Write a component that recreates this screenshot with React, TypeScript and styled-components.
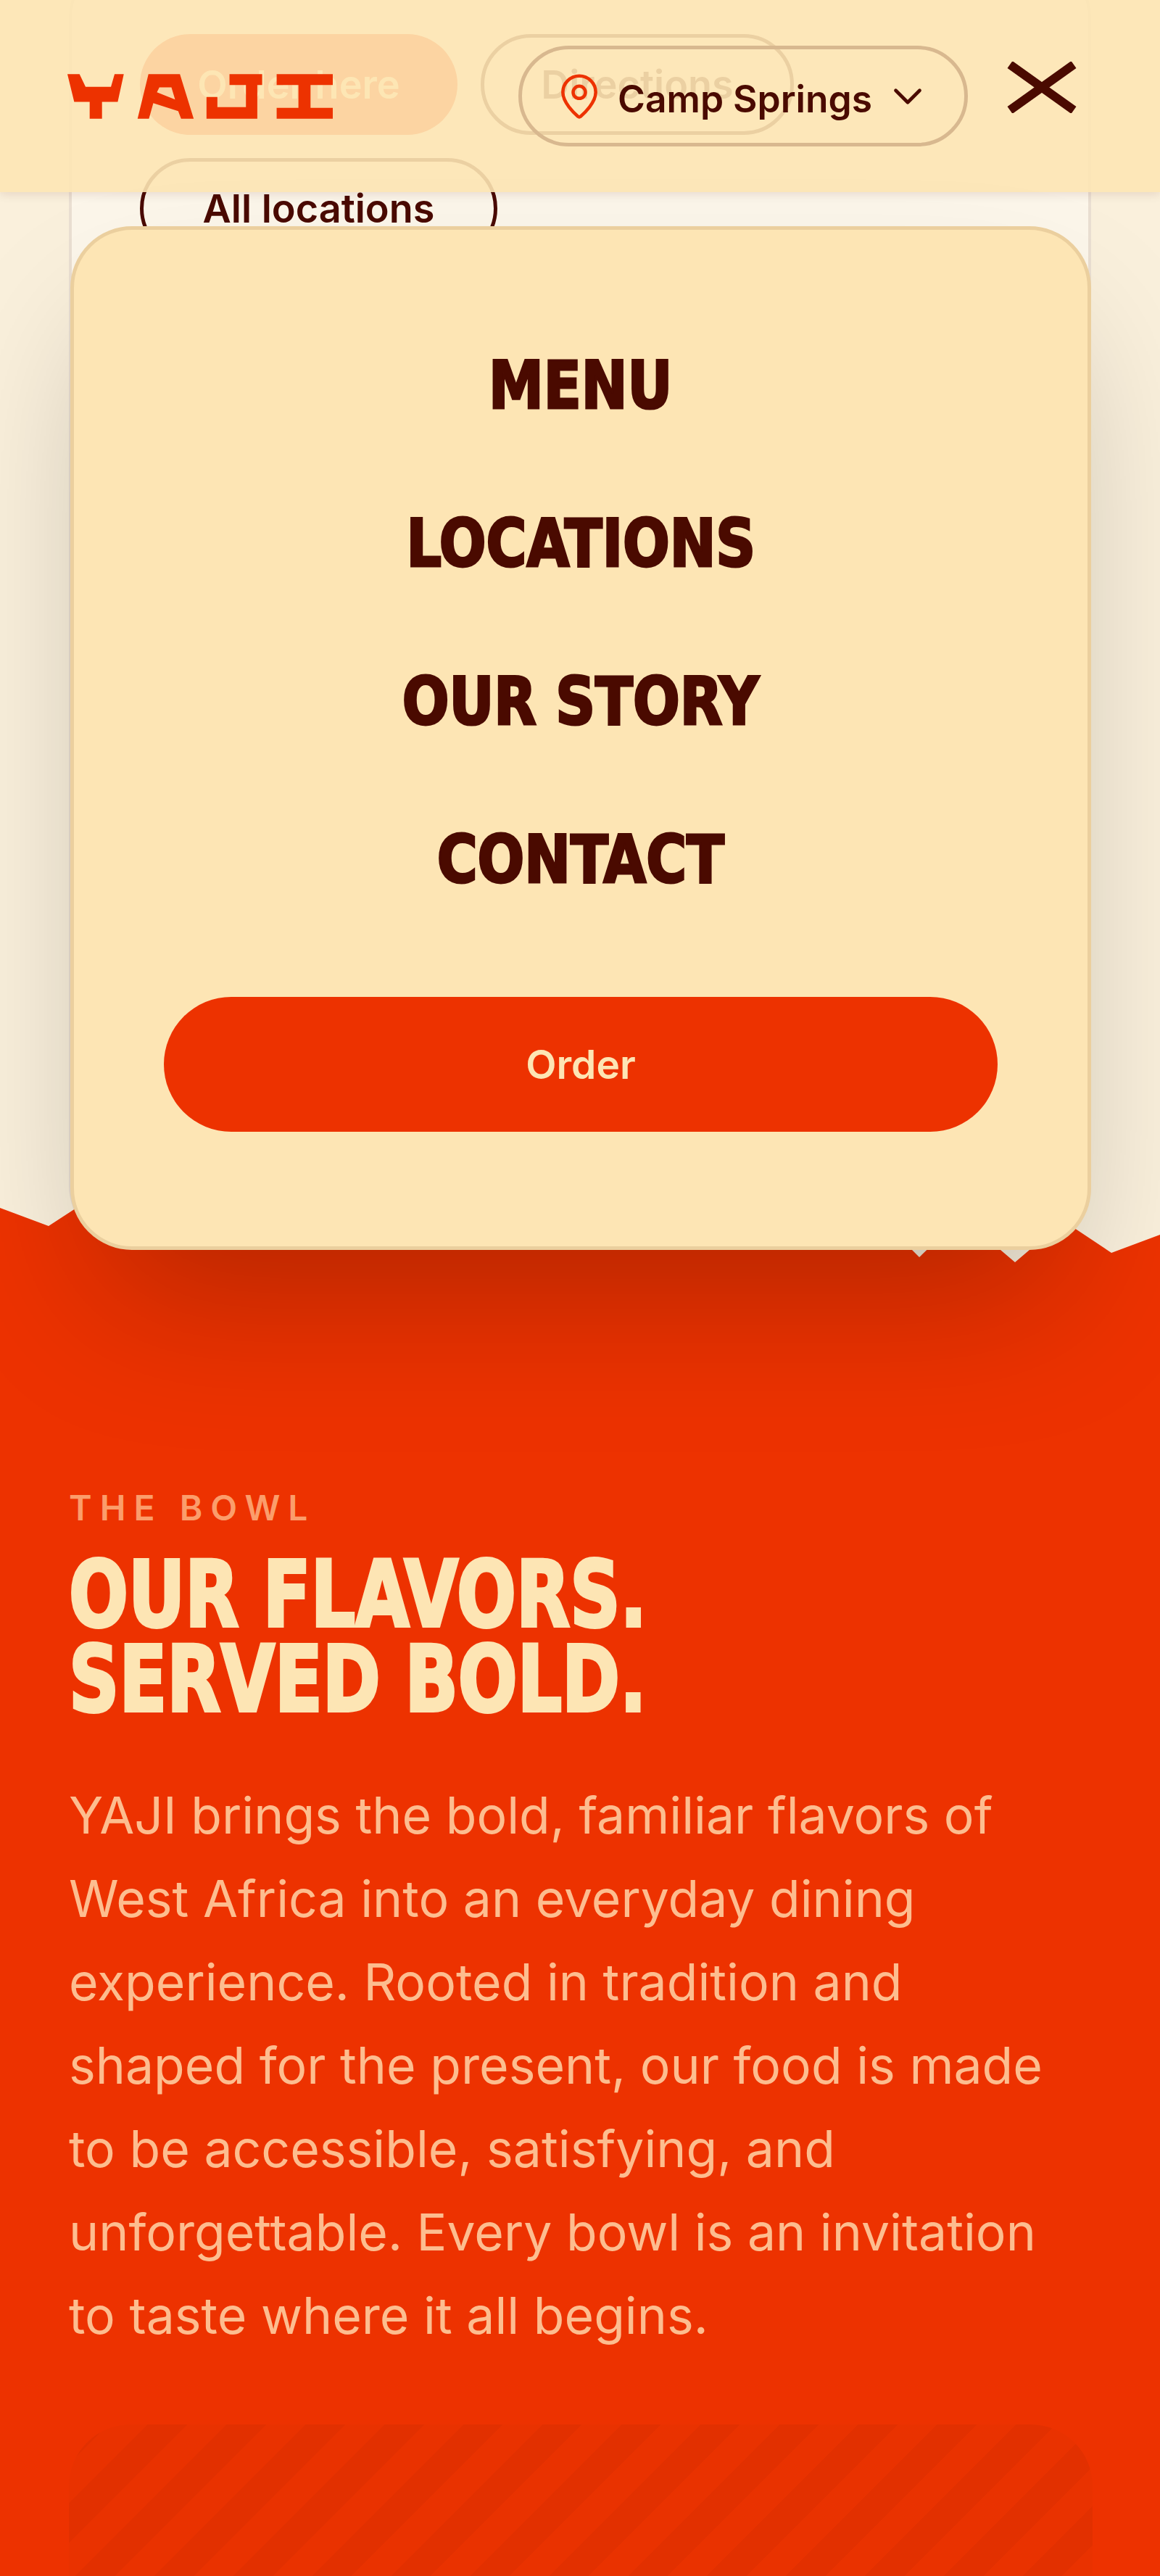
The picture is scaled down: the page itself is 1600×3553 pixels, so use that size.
import styled, { createGlobalStyle } from "styled-components";
import { ChevronDown, MapPin } from "lucide-react";

const cream = "#fde5b4";
const red = "#ed3200";
const maroon = "#4a0a00";

const GlobalStyle = createGlobalStyle`
  html, body {
    margin: 0;
    padding: 0;
    background: #faf0dc;
  }
  * {
    box-sizing: border-box;
  }
`;

const Page = styled.div`
  position: relative;
  width: 1600px;
  height: 3553px;
  overflow: hidden;
  font-family: Inter, "Liberation Sans", sans-serif;
`;

const Hero = styled.section`
  height: 1780px;
  background: #faf0dc;
  padding: 0 95px;
  overflow: hidden;
`;

const LocationCard = styled.div`
  height: 1780px;
  margin-top: -60px;
  padding: 103px 90px 0 94px;
  background: #fcf6ea;
  border: 4px solid #eadfd2;
  border-radius: 85px;
`;

const PillRow = styled.div`
  display: flex;
  flex-wrap: wrap;
  gap: 32px;
`;

const CardPill = styled.a<{ $solid?: boolean; $width: number }>`
  display: flex;
  align-items: center;
  justify-content: center;
  height: 139px;
  width: ${(p) => p.$width}px;
  border-radius: 70px;
  font-size: 54px;
  font-weight: 600;
  color: ${(p) => (p.$solid ? cream : maroon)};
  background: ${(p) => (p.$solid ? red : "transparent")};
  border: ${(p) => (p.$solid ? "none" : `5px solid ${maroon}`)};
`;

const Header = styled.header`
  position: absolute;
  top: 0;
  left: 0;
  display: flex;
  align-items: center;
  justify-content: space-between;
  width: 1600px;
  height: 265px;
  padding: 0 115px 0 93px;
  background: rgba(253, 229, 180, 0.9);
  box-shadow: 0 4px 12px rgba(74, 10, 0, 0.1);
`;

const Logo = styled.svg`
  display: block;
  width: 366px;
  height: 62px;
  fill: ${red};
`;

const HeaderRight = styled.div`
  display: flex;
  align-items: center;
  gap: 54px;
`;

const LocationSelect = styled.button`
  display: flex;
  align-items: center;
  width: 620px;
  height: 139px;
  padding: 0 45px 0 45px;
  font-family: inherit;
  font-size: 51.5px;
  font-weight: 600;
  color: ${maroon};
  background: transparent;
  border: 5px solid #d8b88f;
  border-radius: 70px;
`;

const LocationName = styled.span`
  flex: 1;
  margin: 6px 0 0 19px;
  text-align: left;
  white-space: nowrap;
`;

const CloseIcon = styled.svg`
  display: block;
  width: 96px;
  height: 71px;
  margin-top: -24px;
  stroke: ${maroon};
  stroke-width: 12;
`;

const MenuPanel = styled.div`
  position: absolute;
  top: 312px;
  left: 97px;
  width: 1408px;
  height: 1412px;
  padding: 106px 124px 0;
  background: ${cream};
  border: 5px solid #ebcf9e;
  border-radius: 85px;
  box-shadow: 0 107px 213px -51px rgba(0, 0, 0, 0.25);
`;

const MenuList = styled.nav`
  display: flex;
  flex-direction: column;
  align-items: center;
`;

const MenuLink = styled.a`
  display: block;
  height: 218px;
  font-family: "DejaVu Sans Condensed", "DejaVu Sans", sans-serif;
  font-size: 90px;
  font-weight: 700;
  line-height: 218px;
  color: ${maroon};
  text-transform: uppercase;
  transform: scaleX(0.94);
  -webkit-text-stroke: 3px ${maroon};
`;

const OrderButton = styled.a`
  display: flex;
  align-items: center;
  justify-content: center;
  height: 186px;
  margin-top: 80px;
  font-size: 55px;
  font-weight: 600;
  color: ${cream};
  background: ${red};
  border-radius: 93px;
`;

const BowlSection = styled.section`
  height: 1903px;
  margin-top: -130px;
  padding: 398px 93px 0 95px;
  background: ${red};
  clip-path: polygon(
    0 16px,
    67px 41px,
    130px 0,
    1200px 0,
    1240px 56px,
    1268px 84px,
    1295px 58px,
    1340px 40px,
    1400px 91px,
    1467px 34px,
    1533px 78px,
    1600px 53px,
    1600px 100%,
    0 100%
  );
`;

const Eyebrow = styled.div`
  font-size: 48px;
  font-weight: 600;
  line-height: 64px;
  letter-spacing: 11px;
  color: #fb9d6b;
`;

const Heading = styled.h2`
  margin: 29px 0 0;
  font-family: "DejaVu Sans Condensed", "DejaVu Sans", sans-serif;
  font-size: 126px;
  font-weight: 700;
  line-height: 117px;
  color: ${cream};
  text-transform: uppercase;
  white-space: nowrap;
  transform: scaleX(0.85);
  transform-origin: left top;
  -webkit-text-stroke: 4px ${cream};
`;

const Intro = styled.p`
  margin: 71px 0 0;
  font-size: 69.7px;
  line-height: 115px;
  color: #fdbd8f;
`;

const StripedImage = styled.div`
  height: 500px;
  margin-top: 93px;
  border-radius: 85px;
  background: repeating-linear-gradient(
    -45deg,
    #e93200 0,
    #e93200 4.5px,
    #e23000 4.5px,
    #e23000 43px,
    #e93200 43px,
    #e93200 77px
  );
`;

export default function App() {
  return (
    <Page>
      <GlobalStyle />
      <Hero>
        <LocationCard>
          <PillRow>
            <CardPill $solid $width={438}>
              Order here
            </CardPill>
            <CardPill $width={432}>Directions</CardPill>
            <CardPill $width={493}>All locations</CardPill>
          </PillRow>
        </LocationCard>
      </Hero>

      <BowlSection>
        <Eyebrow>THE BOWL</Eyebrow>
        <Heading>
          Our flavors.
          <br />
          Served bold.
        </Heading>
        <Intro>
          YAJI brings the bold, familiar flavors of West Africa into an everyday
          dining experience. Rooted in tradition and shaped for the present, our
          food is made to be accessible, satisfying, and unforgettable. Every
          bowl is an invitation to taste where it all begins.
        </Intro>
        <StripedImage />
      </BowlSection>

      <Header>
        <Logo viewBox="100 215 1097 185" role="img" aria-label="YAJI">
          <path d="M100 215H150L175 268H280L295 215H333L308 330H243V400H192V330H128Z" />
          <path
            fillRule="evenodd"
            d="M435 215H565L622 400H570L558 368L455 335L437 400H390ZM470 290L545 320L530 270H480Z"
          />
          <path d="M770 215H905V260H885V400H675V310H720V352H838V260H770Z" />
          <path d="M965 215H1197V260H1105V355H1197V400H965V355H1055V260H965Z" />
        </Logo>
        <HeaderRight>
          <LocationSelect>
            <MapPin size={68} color={red} strokeWidth={1.6} />
            <LocationName>Camp Springs</LocationName>
            <ChevronDown size={66} strokeWidth={1.7} />
          </LocationSelect>
          <CloseIcon viewBox="0 0 96 71" fill="none" aria-label="Close menu">
            <path d="M4 4L92 67M92 4L4 67" />
          </CloseIcon>
        </HeaderRight>
      </Header>

      <MenuPanel>
        <MenuList>
          <MenuLink>Menu</MenuLink>
          <MenuLink>Locations</MenuLink>
          <MenuLink>Our Story</MenuLink>
          <MenuLink>Contact</MenuLink>
        </MenuList>
        <OrderButton>Order</OrderButton>
      </MenuPanel>
    </Page>
  );
}
